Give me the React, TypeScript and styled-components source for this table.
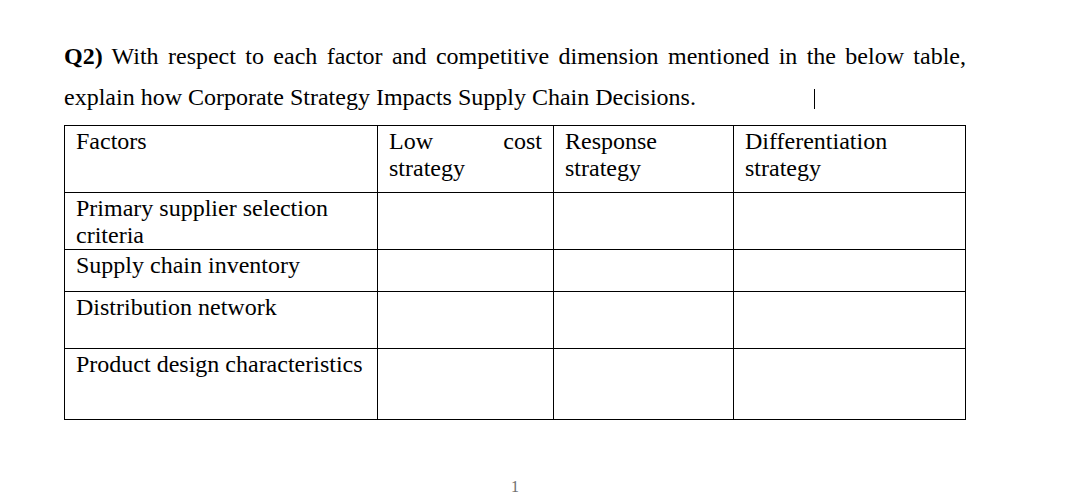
import React from "react";
import styled, { createGlobalStyle } from "styled-components";

const Global = createGlobalStyle`
  html, body { margin: 0; padding: 0; background: #ffffff; }
  body { font-family: "Liberation Serif", "Times New Roman", serif; color: #000; }
`;

const Page = styled.div`
  width: 902px;
  padding: 36px 0 0 64px;
`;

const Line = styled.div<{ $justify?: boolean }>`
  font-size: 24px;
  line-height: 41.4px;
  height: 41.4px;
  white-space: nowrap;
  text-align: ${(p) => (p.$justify ? "justify" : "left")};
  text-align-last: ${(p) => (p.$justify ? "justify" : "auto")};
  ${(p) => (p.$justify ? "white-space: normal;" : "")}
`;

const Caret = styled.span`
  display: inline-block;
  width: 1px;
  height: 20px;
  background: #000;
  margin-left: 118px;
  vertical-align: -4px;
`;

const Table = styled.table`
  margin-top: 6px;
  width: 901px;
  border-collapse: collapse;
  table-layout: fixed;
  font-size: 24px;
  line-height: 27px;
`;

const Row = styled.tr<{ $h: number }>`
  height: ${(p) => p.$h}px;
`;

const Cell = styled.td<{ $justify?: boolean }>`
  border: 1px solid #000;
  vertical-align: top;
  padding: 2px 11px 0 11px;
  text-align: ${(p) => (p.$justify ? "justify" : "left")};
`;

const Footer = styled.div`
  width: 902px;
  margin-top: 58px;
  text-align: center;
  font-size: 16px;
  line-height: 18px;
  color: #6e6e6e;
`;

const rows: { label: string; h: number }[] = [
  { label: "Primary supplier selection criteria", h: 55 },
  { label: "Supply chain inventory", h: 42 },
  { label: "Distribution network", h: 57 },
  { label: "Product design characteristics", h: 71 },
];

export default function App() {
  return (
    <>
      <Global />
      <Page>
        <Line $justify>
          <b>Q2)</b> With respect to each factor and competitive dimension mentioned in the below table,
        </Line>
        <Line>
          explain how Corporate Strategy Impacts Supply Chain Decisions.
          <Caret />
        </Line>
        <Table>
          <colgroup>
            <col style={{ width: 313 }} />
            <col style={{ width: 176 }} />
            <col style={{ width: 180 }} />
            <col style={{ width: 232 }} />
          </colgroup>
          <tbody>
            <Row $h={67}>
              <Cell>Factors</Cell>
              <Cell $justify>Low cost strategy</Cell>
              <Cell>Response strategy</Cell>
              <Cell>Differentiation strategy</Cell>
            </Row>
            {rows.map((r) => (
              <Row key={r.label} $h={r.h}>
                <Cell>{r.label}</Cell>
                <Cell />
                <Cell />
                <Cell />
              </Row>
            ))}
          </tbody>
        </Table>
        <Footer>1</Footer>
      </Page>
    </>
  );
}
